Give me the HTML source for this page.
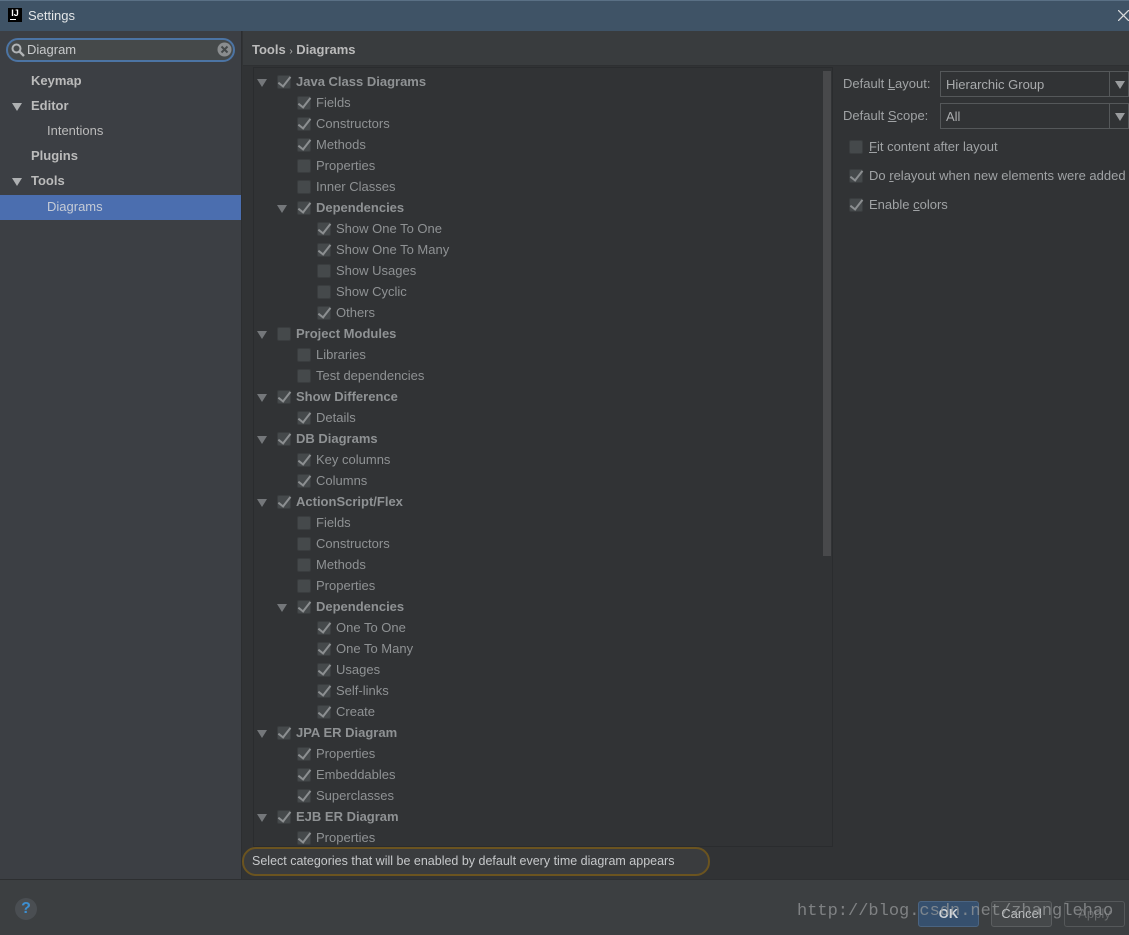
<!DOCTYPE html>
<html><head><meta charset="utf-8"><style>
*{margin:0;padding:0;box-sizing:border-box}
body{width:1129px;height:935px;overflow:hidden;background:#313335;font-family:"Liberation Sans","DejaVu Sans",sans-serif;font-size:13px;color:#a9a9a9;position:relative}
.abs{position:absolute}
#title{left:0;top:0;width:1129px;height:31px;background:#3f5366;border-top:1px solid #5a7085}
#side{left:0;top:31px;width:242px;height:848px;background:#3c3f44;border-right:1px solid #2c2e30}
#hdr{left:243px;top:31px;width:886px;height:35px;background:#393c3e;border-bottom:1px solid #2e3032}
#tree{left:253px;top:67px;width:580px;height:780px;border:1px solid #2a2c2e;background:#313335;overflow:hidden}
#bottom{left:0;top:879px;width:1129px;height:56px;background:#3c3f41;border-top:1px solid #2d2f31}
.r{position:absolute;height:21px;line-height:21px;white-space:nowrap;color:#8f9294}
.r.b{font-weight:bold;color:#8f9294}
.cb{position:absolute;width:14px;height:14px;background:#45494b;border:1px solid #3a3d3f;border-radius:2px;top:4px}
.cb.c::after{content:"";position:absolute;left:3px;top:-2px;width:5px;height:11px;border-right:2px solid #8c8f91;border-bottom:2px solid #8c8f91;transform:rotate(38deg)}
.tri{position:absolute;top:8px;width:0;height:0;border-left:5px solid transparent;border-right:5px solid transparent;border-top:8px solid #74777a}
.side-item{position:absolute;height:24px;line-height:24px;color:#bbbbbb;font-size:13px}
</style></head><body>
<div id="title" class="abs">
 <div class="abs" style="left:8px;top:7px;width:14px;height:14px;background:#000;color:#fff;font-size:9px;font-weight:bold;line-height:11px;text-align:center">IJ<div style="position:absolute;left:2px;bottom:2px;width:6px;height:1px;background:#fff"></div></div>
 <div class="abs" style="left:28px;top:7px;color:#e3e6e8;font-size:13px">Settings</div>
 <svg class="abs" style="left:1118px;top:9px" width="11" height="11"><path d="M0 0L11 11M11 0L0 11" stroke="#d8dadc" stroke-width="1.3"/></svg>
</div>
<div id="side" class="abs">
 <div class="abs" style="left:6px;top:7px;width:229px;height:24px;border:2px solid #4c74a4;border-radius:12px;background:#45494a"></div>
 <svg class="abs" style="left:11px;top:12px" width="14" height="14"><circle cx="5.5" cy="5.5" r="4" fill="none" stroke="#b0b3b5" stroke-width="2"/><line x1="8.5" y1="8.5" x2="13" y2="13" stroke="#b0b3b5" stroke-width="2.4"/></svg>
 <div class="abs" style="left:27px;top:11px;color:#c8cacc;font-size:13px">Diagram</div>
 <svg class="abs" style="left:217px;top:11px" width="15" height="15"><circle cx="7.5" cy="7.5" r="7" fill="#8a8d8f"/><path d="M4.5 4.5L10.5 10.5M10.5 4.5L4.5 10.5" stroke="#45494a" stroke-width="2"/></svg>
 <div class="side-item" style="left:31px;top:38px;font-weight:bold">Keymap</div>
 <div class="tri" style="left:12px;top:72px;border-top-color:#aeb0b2"></div>
 <div class="side-item" style="left:31px;top:63px;font-weight:bold">Editor</div>
 <div class="side-item" style="left:47px;top:88px">Intentions</div>
 <div class="side-item" style="left:31px;top:113px;font-weight:bold">Plugins</div>
 <div class="tri" style="left:12px;top:147px;border-top-color:#aeb0b2"></div>
 <div class="side-item" style="left:31px;top:138px;font-weight:bold">Tools</div>
 <div class="abs" style="left:0;top:164px;width:241px;height:25px;background:#4b6eaf"></div>
 <div class="side-item" style="left:47px;top:164px;color:#c5cbd6">Diagrams</div>
</div>
<div id="hdr" class="abs"><div class="abs" style="left:9px;top:11px;font-weight:bold;color:#bbbbbb">Tools <span style="font-weight:normal;font-size:10px">›</span> Diagrams</div></div>
<div id="tree" class="abs">
 <div class="abs" style="left:569px;top:3px;width:8px;height:485px;background:#48494b"></div>
<div id="rows"></div>
</div>
<div class="abs" style="left:242px;top:847px;width:468px;height:29px;border:2px solid #6b5420;border-radius:14px;background:#3a3c3e"></div>
<div class="abs" style="left:252px;top:854px;color:#c6c8ca;font-size:12.5px">Select categories that will be enabled by default every time diagram appears</div>

<div class="abs" style="left:843px;top:76px;color:#a0a3a5">Default <u>L</u>ayout:</div>
<div class="abs" style="left:940px;top:71px;width:189px;height:26px;border:1px solid #55585a;background:#313335"><span class="abs" style="left:5px;top:5px;color:#a9abad">Hierarchic Group</span><div class="abs" style="left:168px;top:0;width:1px;height:24px;background:#55585a"></div><div class="tri" style="left:174px;top:9px;border-top-color:#9a9c9e"></div></div>
<div class="abs" style="left:843px;top:108px;color:#a0a3a5">Default <u>S</u>cope:</div>
<div class="abs" style="left:940px;top:103px;width:189px;height:26px;border:1px solid #55585a;background:#313335"><span class="abs" style="left:5px;top:5px;color:#a9abad">All</span><div class="abs" style="left:168px;top:0;width:1px;height:24px;background:#55585a"></div><div class="tri" style="left:174px;top:9px;border-top-color:#9a9c9e"></div></div>
<div class="r" style="left:849px;top:136px;width:280px"><div class="cb" style="left:0"></div><span style="margin-left:20px;color:#a0a3a5"><u>F</u>it content after layout</span></div>
<div class="r" style="left:849px;top:165px;width:280px"><div class="cb c" style="left:0"></div><span style="margin-left:20px;color:#a0a3a5">Do <u>r</u>elayout when new elements were added</span></div>
<div class="r" style="left:849px;top:194px;width:280px"><div class="cb c" style="left:0"></div><span style="margin-left:20px;color:#a0a3a5">Enable <u>c</u>olors</span></div>

<div id="bottom" class="abs">
 <div class="abs" style="left:15px;top:18px;width:22px;height:22px;border-radius:50%;background:#4a4e52;color:#3d8fd1;font-weight:bold;font-size:16px;text-align:center;line-height:22px">?</div>
 <div class="abs" style="left:918px;top:21px;width:61px;height:26px;background:#36506e;border:1px solid #4a6482;border-radius:3px;color:#d0d4d8;font-weight:bold;text-align:center;line-height:24px">OK</div>
 <div class="abs" style="left:991px;top:21px;width:61px;height:26px;background:#45484a;border:1px solid #5b5e60;border-radius:3px;color:#c0c2c4;text-align:center;line-height:24px">Cancel</div>
 <div class="abs" style="left:1064px;top:21px;width:61px;height:26px;border:1px solid #55585a;border-radius:3px;color:#6a6c6e;text-align:center;line-height:24px">Apply</div>
 <div class="abs" style="left:797px;top:22px;font-family:'Liberation Mono',monospace;font-size:17px;color:rgba(150,152,154,0.75)">http://blog.csdn.net/zhanglehao</div>
</div>
<script>
var R=[[0,1,1,"Java Class Diagrams"],[1,0,1,"Fields"],[1,0,1,"Constructors"],[1,0,1,"Methods"],[1,0,0,"Properties"],[1,0,0,"Inner Classes"],[1,1,1,"Dependencies"],[2,0,1,"Show One To One"],[2,0,1,"Show One To Many"],[2,0,0,"Show Usages"],[2,0,0,"Show Cyclic"],[2,0,1,"Others"],[0,1,0,"Project Modules"],[1,0,0,"Libraries"],[1,0,0,"Test dependencies"],[0,1,1,"Show Difference"],[1,0,1,"Details"],[0,1,1,"DB Diagrams"],[1,0,1,"Key columns"],[1,0,1,"Columns"],[0,1,1,"ActionScript/Flex"],[1,0,0,"Fields"],[1,0,0,"Constructors"],[1,0,0,"Methods"],[1,0,0,"Properties"],[1,1,1,"Dependencies"],[2,0,1,"One To One"],[2,0,1,"One To Many"],[2,0,1,"Usages"],[2,0,1,"Self-links"],[2,0,1,"Create"],[0,1,1,"JPA ER Diagram"],[1,0,1,"Properties"],[1,0,1,"Embeddables"],[1,0,1,"Superclasses"],[0,1,1,"EJB ER Diagram"],[1,0,1,"Properties"]];
var h="";R.forEach(function(r,i){var top=3+21*i,cx=23+20*r[0],bold=r[0]==0||r[1];
h+='<div class="r'+(bold?' b':'')+'" style="left:0;top:'+top+'px;width:560px">'+(r[1]?'<div class="tri" style="left:'+(cx-20)+'px"></div>':'')+'<div class="cb'+(r[2]?' c':'')+'" style="left:'+cx+'px"></div><span class="abs" style="left:'+(cx+19)+'px">'+r[3]+'</span></div>';});
document.getElementById("rows").innerHTML=h;
</script>
</body></html>
